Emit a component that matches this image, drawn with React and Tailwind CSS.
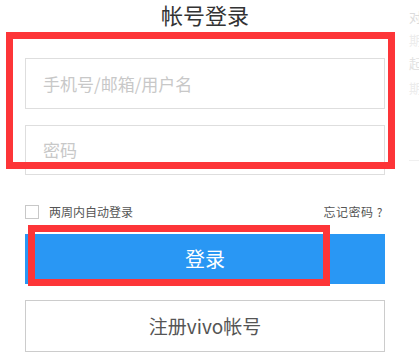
import React from "react";

export default function App() {
  const font = { fontFamily: '"Noto Sans CJK SC", "Noto Sans", sans-serif' };
  return (
    <div className="relative w-[419px] h-[358px] bg-white overflow-hidden" style={font}>
      <div className="flex">
        <div className="ml-[25px] w-[360px] shrink-0 flex flex-col">
          <h1 className="pt-[2px] h-[58px] text-center text-[22px] leading-[24px] text-[#333] font-normal">帐号登录</h1>
          <div className="h-[51px] border border-[#dedede] flex items-center pl-[17px] text-[17px] text-[#c8c8c8]">
            手机号/邮箱/用户名
          </div>
          <div className="mt-[16px] h-[50px] border border-[#dedede] flex items-center pl-[17px] text-[17px] text-[#c8c8c8]">
            密码
          </div>
          <div className="mt-[30px] h-[14px] flex items-center justify-between">
            <div className="flex items-center">
              <div className="w-[14px] h-[14px] border border-[#c8c8c8] bg-white" />
              <span className="ml-[10px] text-[12px] leading-[14px] text-[#555]">两周内自动登录</span>
            </div>
            <span className="mr-[2px] text-[12px] leading-[14px] text-[#555] tracking-[0.5px]">忘记密码 ?</span>
          </div>
          <div className="mt-[15px] h-[50px] bg-[#2997f4] flex items-center justify-center text-white text-[20px]">
            登录
          </div>
          <div className="mt-[16px] h-[52px] border border-[#cccccc] flex items-center justify-center text-[19px] text-[#555]">
            注册vivo帐号
          </div>
        </div>
        <div className="ml-[24px] w-[30px] shrink-0 flex flex-col text-[13px] leading-[13px]">
          <span className="mt-[10px] text-[#dcdcdc]">对</span>
          <span className="mt-[10px] text-[#ececec]">期</span>
          <span className="mt-[10px] text-[#e2e2e2]">起</span>
          <span className="mt-[12px] text-[#ececec]">期</span>
          <div className="mt-[66px] h-px bg-[#f0f0f0] w-[30px]" />
        </div>
      </div>
      <div className="absolute left-[6px] top-[32px] w-[389px] h-[137px] border-[7px] border-[#fd3538]" />
      <div className="absolute left-[28px] top-[225px] w-[302px] h-[61px] border-[7px] border-[#fd3538]" />
    </div>
  );
}
